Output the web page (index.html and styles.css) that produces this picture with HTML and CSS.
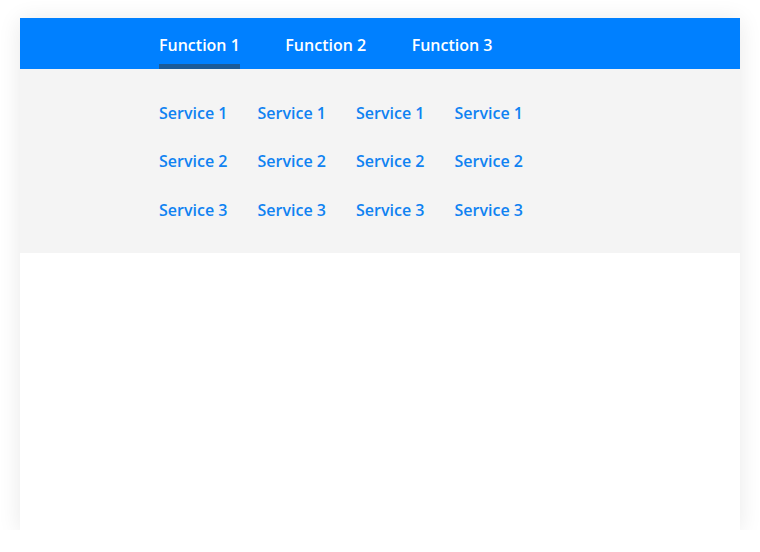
FILE: index.html
```html
<!DOCTYPE html>
<html>
<head>
<meta charset="utf-8">
<link rel="stylesheet" href="styles.css">
</head>
<body>
<div class="card">
  <nav class="topbar">
    <a class="tab active">Function 1</a>
    <a class="tab">Function 2</a>
    <a class="tab">Function 3</a>
  </nav>
  <div class="panel">
    <div class="grid">
      <a class="svc">Service 1</a><a class="svc">Service 1</a><a class="svc">Service 1</a><a class="svc">Service 1</a>
      <a class="svc">Service 2</a><a class="svc">Service 2</a><a class="svc">Service 2</a><a class="svc">Service 2</a>
      <a class="svc">Service 3</a><a class="svc">Service 3</a><a class="svc">Service 3</a><a class="svc">Service 3</a>
    </div>
  </div>
</div>
</body>
</html>
```
FILE: styles.css
```css
html, body { margin: 0; padding: 0; background: #ffffff; }
body { font-family: "Open Sans", "Noto Sans", sans-serif; }
.card {
  margin: 18px 20px 0 20px;
  width: 720px;
  height: 512px;
  background: #ffffff;
  box-shadow: 0 2px 22px rgba(0,0,0,0.09);
}
.topbar {
  display: flex;
  gap: 45.5px;
  height: 51px;
  padding-left: 139px;
  background: #0080ff;
}
.tab {
  box-sizing: border-box;
  height: 51px;
  padding-top: 16px;
  line-height: 22px;
  font-size: 16px;
  font-weight: 600;
  color: #ffffff;
  border-bottom: 5px solid transparent;
}
.tab.active { border-bottom-color: #1b5b99; }
.panel {
  background: #f4f4f4;
  height: 184px;
  box-sizing: border-box;
  padding: 19.5px 0 0 139px;
}
.grid {
  display: grid;
  grid-template-columns: repeat(4, 98.5px);
}
.svc {
  font-size: 16px;
  font-weight: 600;
  line-height: 48.5px;
  color: #0f82f2;
  white-space: nowrap;
}
```
